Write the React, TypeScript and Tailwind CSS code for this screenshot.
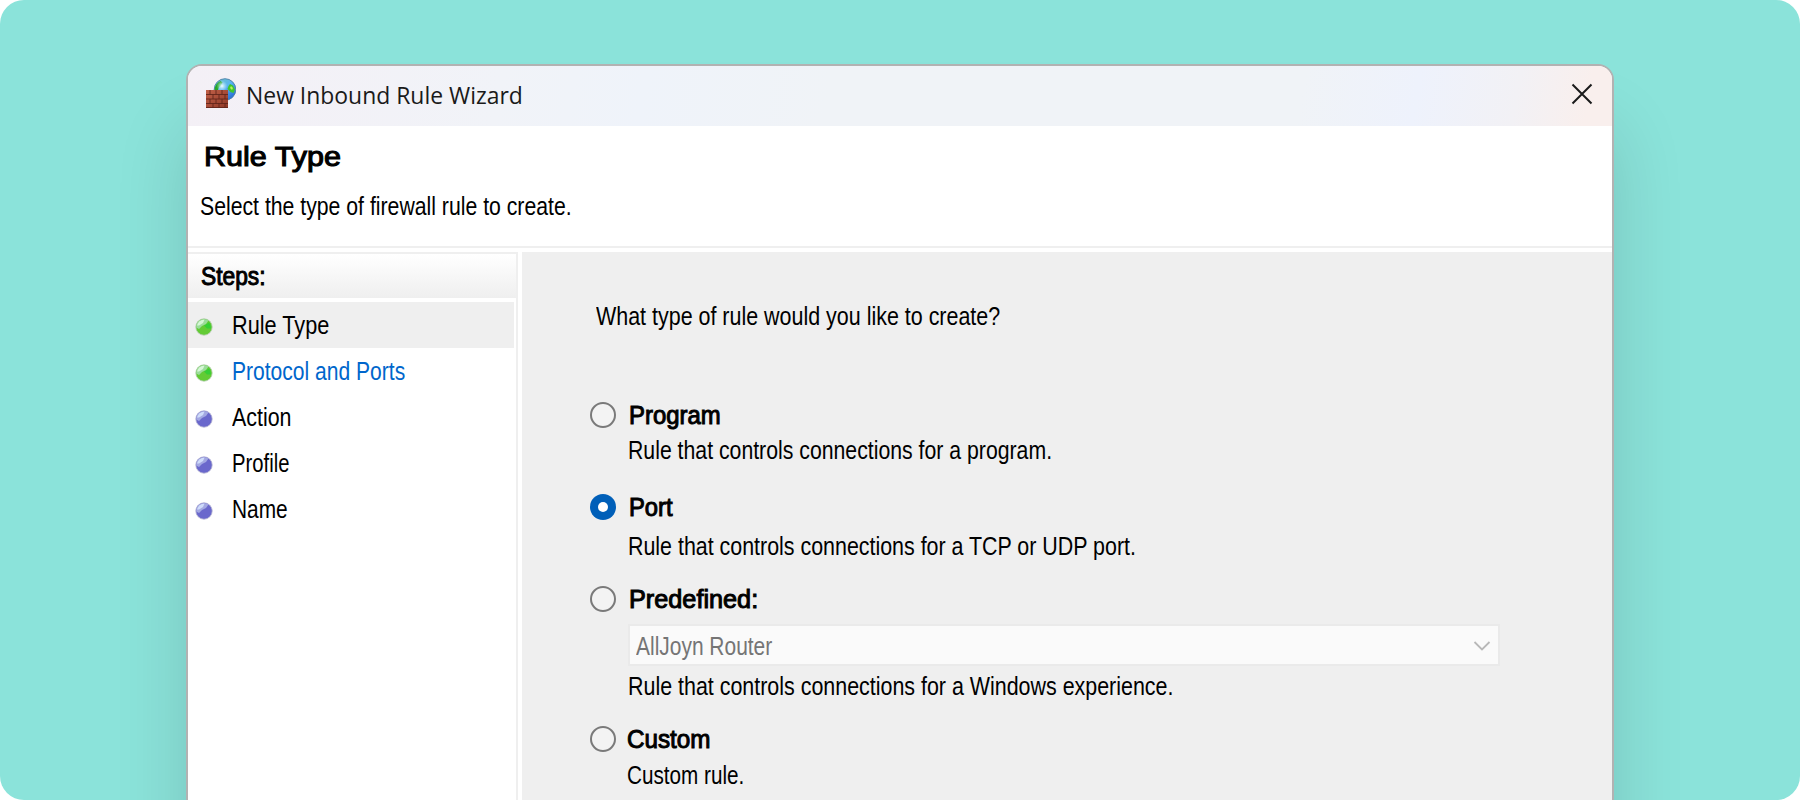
import type { ReactNode } from "react";

function Label({ className = "", children }: { className?: string; children: ReactNode }) {
  return (
    <span className={`block w-max origin-left whitespace-nowrap text-[25px] leading-[30px] ${className}`}>
      {children}
    </span>
  );
}

function FirewallIcon() {
  return (
    <svg width="30" height="32" viewBox="0 0 30 32" className="mb-1 shrink-0">
      <defs>
        <linearGradient id="globe" x1="0.1" y1="0" x2="0.9" y2="1">
          <stop offset="0" stopColor="#6fc3c9" />
          <stop offset="0.45" stopColor="#58b4f2" />
          <stop offset="1" stopColor="#1f5fd0" />
        </linearGradient>
        <linearGradient id="brick" x1="0" y1="0" x2="1" y2="1">
          <stop offset="0" stopColor="#c06048" />
          <stop offset="1" stopColor="#8f3827" />
        </linearGradient>
        <radialGradient id="glow">
          <stop offset="0" stopColor="#f2ffff" />
          <stop offset="1" stopColor="#bdeaff" stopOpacity="0" />
        </radialGradient>
      </defs>
      <circle cx="19" cy="11.5" r="10.800" fill="url(#globe)" stroke="#4d7fa6" strokeWidth="0.9" />
      <path d="M8.500 12c.3-4 2.500-7.500 6-9l2 1.500-1.500 3-2 1.500-1 3z" fill="#27a827" />
      <path d="M24 6l3 1.500 2 4-1.500 3.500-3-1-3-3 1-3z" fill="#3fc62c" />
      <path d="M25 8l2 2-1 2-2-2z" fill="#b8f05a" />
      <circle cx="16" cy="8" r="5.500" fill="url(#glow)" />
      <path d="M0 12h22v18H0z" fill="url(#brick)" />
      <path
        d="M0 16.500h22M0 21h22M0 25.500h22M0 29.500h22M4 12v4.500M10 12v4.500M16 12v4.500M7 16.500V21M13 16.500V21M19 16.500V21M4 21v4.500M10 21v4.500M16 21v4.500M7 25.500V30M13 25.500V30M19 25.500V30"
        stroke="#63261b"
        strokeWidth="0.9"
        fill="none"
      />
    </svg>
  );
}

function Ball({ done }: { done: boolean }) {
  return (
    <svg width="18" height="18" viewBox="0 0 18 18" className="shrink-0">
      <circle cx="9" cy="9" r="8.200" fill={done ? "#63cb35" : "#6a68cc"} stroke={done ? "#b5cbb2" : "#b4b3d0"} strokeWidth="0.8" />
      {done && <path d="M14 4.500a8 8 0 0 1 2 6h-4l-3-3z" fill="#35cf35" />}
      <path d="M1.200 9.500A8 8 0 0 1 13.500 2.500L11 6 7 8l-3 3z" fill={done ? "#9bdc9b" : "#a3a8e2"} />
      <path d="M2 7.500A7.500 7.500 0 0 1 9.500 1.500L8 5 4 7.500z" fill={done ? "#d6f7d6" : "#cfdcfa"} />
    </svg>
  );
}

function Radio({ checked = false }: { checked?: boolean }) {
  return (
    <span
      className={
        checked
          ? "flex size-[26px] shrink-0 items-center justify-center rounded-full bg-[#005fb8]"
          : "size-[26px] shrink-0 rounded-full border-2 border-[#7a7a7a] bg-[#f3f3f3]"
      }
    >
      {checked && <span className="size-[10px] rounded-full bg-white" />}
    </span>
  );
}

const bold = "[-webkit-text-stroke:1px_black]";

const steps = [
  { name: "Rule Type", done: true, style: "scale-x-[0.868]" },
  { name: "Protocol and Ports", done: true, style: "scale-x-[0.842] text-[#0066cc]" },
  { name: "Action", done: false, style: "scale-x-[0.855]" },
  { name: "Profile", done: false, style: "scale-x-[0.810]" },
  { name: "Name", done: false, style: "scale-x-[0.835]" },
];

export default function App() {
  return (
    <div className="h-[800px] w-[1800px] overflow-hidden bg-white">
      <div className="h-full overflow-hidden rounded-[24px] bg-[#8be3da] pt-16 pl-[186px] font-['Liberation_Sans',sans-serif] text-black">
        <div className="flex h-[900px] w-[1428px] flex-col overflow-hidden rounded-[16px] border-2 border-[#b2b2b2] bg-white shadow-[0_64px_72px_rgba(0,0,0,0.14)]">
          <header className="flex h-[60px] shrink-0 items-center bg-[linear-gradient(100deg,#f4f0f6_0%,#f1f3f8_22%,#eff3fa_32%,#f0f3f7_45%,#f0f3f7_78%,#eef2fc_86%,#f2f1f5_93%,#f9efed_98%)] pr-[19px] pl-[18px]">
            <FirewallIcon />
            <h1 className="mb-[2px] ml-[10px] w-max origin-left scale-x-[0.955] font-['Open_Sans',sans-serif] text-[24px] leading-[30px] whitespace-nowrap text-[#1a1a1a]">
              New Inbound Rule Wizard
            </h1>
            <svg width="22" height="22" viewBox="0 0 22 22" className="mb-1 ml-auto">
              <path d="M1.500 1.500l19 19M20.500 1.500l-19 19" stroke="#1a1a1a" strokeWidth="2" />
            </svg>
          </header>

          <section className="h-[120px] shrink-0 pt-[15px]">
            <h2 className="ml-4 w-max origin-left scale-x-[1.090] text-[28px] leading-8 font-normal whitespace-nowrap [-webkit-text-stroke:1.100px_black]">
              Rule Type
            </h2>
            <Label className="mt-[18px] ml-3 scale-x-[0.849]">Select the type of firewall rule to create.</Label>
          </section>
          <div className="h-[6px] shrink-0 border-t-2 border-[#efefef]" />

          <div className="flex flex-1">
            <aside className="w-[330px] shrink-0 border-t-2 border-r-2 border-[#efefef]">
              <div className="h-11 bg-linear-to-b from-white to-[#efefef] pt-[7px] pl-[13px]">
                <Label className={`scale-x-[0.910] ${bold}`}>Steps:</Label>
              </div>
              <ul className="mt-1 mr-[2px]">
                {steps.map((step, i) => (
                  <li key={step.name} className={`flex h-[46px] items-center gap-[19px] pl-[7px] ${i === 0 ? "bg-[#efefef]" : ""}`}>
                    <span className="pt-[3px]"><Ball done={step.done} /></span>
                    <Label className={step.style}>{step.name}</Label>
                  </li>
                ))}
              </ul>
            </aside>

            <main className="ml-1 flex-1 bg-[#efefef] pt-[49px] pl-[68px]">
              <Label className="ml-[6px] scale-x-[0.858]">What type of rule would you like to create?</Label>

              <div className="mt-[69px] flex items-center gap-[13px]">
                <Radio />
                <Label className={`scale-x-[0.955] ${bold}`}>Program</Label>
              </div>
              <Label className="mt-[5px] ml-[38px] scale-x-[0.850]">Rule that controls connections for a program.</Label>

              <div className="mt-[27px] flex items-center gap-[13px]">
                <Radio checked />
                <Label className={`scale-x-[0.950] ${bold}`}>Port</Label>
              </div>
              <Label className="mt-[9px] ml-[38px] scale-x-[0.856]">Rule that controls connections for a TCP or UDP port.</Label>

              <div className="mt-[23px] flex items-center gap-[13px]">
                <Radio />
                <Label className={`scale-x-[1.010] ${bold}`}>Predefined:</Label>
              </div>
              <div className="mt-[10px] ml-[38px] flex h-[42px] w-[872px] items-center justify-between border-2 border-[#eaeaea] bg-[#fafafa] pr-[7px] pl-[6px]">
                <Label className="mt-px scale-x-[0.838] text-[#757575]">AllJoyn Router</Label>
                <svg width="18" height="12" viewBox="0 0 18 12" className="mt-px">
                  <path d="M1.500 2L9 9.500 16.500 2" stroke="#b8b8b8" strokeWidth="1.800" fill="none" />
                </svg>
              </div>
              <Label className="mt-[5px] ml-[38px] scale-x-[0.857]">Rule that controls connections for a Windows experience.</Label>

              <div className="mt-[23px] flex items-center gap-[11px]">
                <Radio />
                <Label className={`scale-x-[0.970] ${bold}`}>Custom</Label>
              </div>
              <Label className="mt-[6px] ml-[37px] scale-x-[0.828]">Custom rule.</Label>
            </main>
          </div>
        </div>
      </div>
    </div>
  );
}
